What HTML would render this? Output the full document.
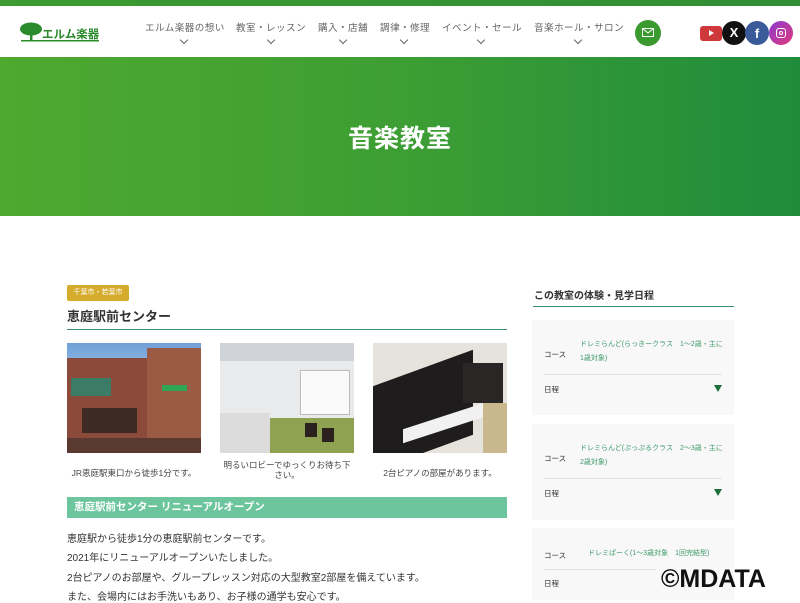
<!DOCTYPE html>
<html><head><meta charset="utf-8">
<style>
*{margin:0;padding:0;box-sizing:border-box}
body{width:800px;height:600px;overflow:hidden;background:#fff;font-family:"Liberation Sans","Noto Sans CJK JP",sans-serif;color:#333;position:relative}
.topbar{position:absolute;left:0;top:0;width:800px;height:6px;background:linear-gradient(90deg,#3d9b32,#2f8d35)}
.header{position:absolute;top:6px;left:0;width:800px;height:51px;background:#fff}
.logo{position:absolute;left:20px;top:15px}
.nav{position:absolute;top:14px;font-size:9.6px;color:#666;letter-spacing:0.4px}
.chev{position:absolute;width:6px;height:6px;border-right:1.2px solid #666;border-bottom:1.2px solid #666;transform:rotate(45deg)}
.circ{position:absolute;border-radius:50%}
.hero{position:absolute;top:57px;left:0;width:800px;height:159px;background:linear-gradient(90deg,#4ea92f 0%,#3d9e33 50%,#1f8c3c 100%)}
.hero h1{position:absolute;width:800px;top:62px;text-align:center;color:#fff;font-size:25px;font-weight:bold;letter-spacing:1px}
.tag{position:absolute;left:67px;top:285px;width:62px;height:16px;background:#d6ac2c;border-radius:2px;color:#fff;font-size:7px;text-align:center;line-height:16px}
.t1{position:absolute;left:67px;top:306px;font-size:13px;font-weight:bold;color:#333}
.line{position:absolute;height:1px;background:#3b8f6a}
.ph{position:absolute;top:343px;width:134px;height:110px;overflow:hidden}
.cap{position:absolute;font-size:8.5px;color:#444;text-align:center;width:134px}
.bar{position:absolute;left:67px;top:497px;width:440px;height:21px;background:#6cc59c;color:#fff;font-weight:bold;font-size:10.5px;line-height:21px;padding-left:7px}
.p{position:absolute;left:67px;font-size:10px;color:#333}
.side h3{position:absolute;left:534px;top:287px;font-size:10px;color:#333;font-weight:bold}
.card{position:absolute;left:532px;width:202px;background:#f8f8f8}
.lab{position:absolute;font-size:7.5px;color:#333;left:12px}
.crs{position:absolute;left:48px;font-size:7px;color:#3e9a6b;line-height:14px;width:145px}
.tri{position:absolute;right:12px;width:0;height:0;border-left:4px solid transparent;border-right:4px solid transparent;border-top:7px solid #1e6f3a}
.sep{position:absolute;left:12px;height:1px;background:#e4e4e4}
.wm{position:absolute;left:661px;top:565px;font-size:25px;color:#111;font-weight:bold}
</style></head><body>
<div class="topbar"></div>
<div class="header">
 <svg class="logo" width="90" height="24" viewBox="0 0 90 24">
  <ellipse cx="11" cy="8" rx="11" ry="6.5" fill="#2b8a2b"/>
  <rect x="10" y="11" width="2.5" height="9" fill="#2b8a2b"/>
  <rect x="1" y="19" width="78" height="1.5" fill="#2b8a2b"/>
  <text x="22" y="17" font-size="11.5" font-weight="bold" fill="#2b8a2b" font-family="Noto Sans CJK JP,sans-serif">エルム楽器</text>
 </svg>
 <div class="nav" style="left:145px">エルム楽器の想い</div><div class="chev" style="left:181px;top:31px"></div>
 <div class="nav" style="left:236px">教室・レッスン</div><div class="chev" style="left:268px;top:31px"></div>
 <div class="nav" style="left:318px">購入・店舗</div><div class="chev" style="left:340px;top:31px"></div>
 <div class="nav" style="left:380px">調律・修理</div><div class="chev" style="left:401px;top:31px"></div>
 <div class="nav" style="left:442px">イベント・セール</div><div class="chev" style="left:478px;top:31px"></div>
 <div class="nav" style="left:534px">音楽ホール・サロン</div><div class="chev" style="left:575px;top:31px"></div>
 <div class="circ" style="left:635px;top:14px;width:26px;height:26px;background:#3a9a30"></div>
 <svg style="position:absolute;left:642px;top:22px" width="12" height="9" viewBox="0 0 12 9"><rect x="0.5" y="0.5" width="11" height="8" fill="none" stroke="#fff"/><path d="M0.5 0.5L6 5L11.5 0.5" fill="none" stroke="#fff"/></svg>
 <div style="position:absolute;left:700px;top:20px;width:22px;height:15px;background:#d0393b;border-radius:3px"></div>
 <div style="position:absolute;left:709px;top:24px;border-left:5px solid #fff;border-top:3.5px solid transparent;border-bottom:3.5px solid transparent"></div>
 <div class="circ" style="left:722px;top:15px;width:24px;height:24px;background:#111;color:#fff;font-size:13px;font-weight:bold;text-align:center;line-height:24px">X</div>
 <div class="circ" style="left:745px;top:15px;width:24px;height:24px;background:#3b5a9a;color:#fff;font-size:13px;font-weight:bold;text-align:center;line-height:25px">f</div>
 <div class="circ" style="left:769px;top:15px;width:24px;height:24px;background:linear-gradient(135deg,#8a3ad0,#e23a7c)"></div>
 <div style="position:absolute;left:776px;top:22px;width:10px;height:10px;border:1.5px solid #fff;border-radius:3px"></div>
 <div class="circ" style="left:779px;top:25px;width:4px;height:4px;border:1.2px solid #fff"></div>
</div>
<div class="hero"><h1>音楽教室</h1></div>

<div class="tag">千葉市・若葉市</div>
<div class="t1">恵庭駅前センター</div>
<div class="line" style="left:67px;top:329px;width:440px"></div>

<div class="ph" style="left:67px;background:linear-gradient(#6f9fd8 0%,#9cc0e8 30%,#8a5040 30%)">
 <div style="position:absolute;left:0;top:15px;width:134px;height:95px;background:#8b4a3a"></div>
 <div style="position:absolute;left:80px;top:5px;width:54px;height:105px;background:#9a5a44"></div>
 <div style="position:absolute;left:4px;top:35px;width:40px;height:18px;background:#3c7c66"></div>
 <div style="position:absolute;left:95px;top:42px;width:25px;height:6px;background:#2fa655"></div>
 <div style="position:absolute;left:15px;top:65px;width:55px;height:25px;background:#3e2a24"></div>
 <div style="position:absolute;left:0;top:95px;width:134px;height:15px;background:#5a3a30"></div>
</div>
<div class="ph" style="left:220px;background:#e9eaec">
 <div style="position:absolute;left:0;top:0;width:134px;height:18px;background:#cfd2d6"></div>
 <div style="position:absolute;left:80px;top:27px;width:50px;height:45px;background:#fafafa;border:1px solid #bbb"></div>
 <div style="position:absolute;left:0;top:75px;width:134px;height:35px;background:#8fa252"></div>
 <div style="position:absolute;left:0;top:70px;width:50px;height:40px;background:#dcdcdc"></div>
 <div style="position:absolute;left:85px;top:80px;width:12px;height:14px;background:#2b2220"></div>
 <div style="position:absolute;left:102px;top:85px;width:12px;height:14px;background:#2b2220"></div>
</div>
<div class="ph" style="left:373px;background:#e6e3dd">
 <div style="position:absolute;left:0;top:25px;width:100px;height:85px;background:#1e1c1c;transform:skewY(-20deg)"></div>
 <div style="position:absolute;left:30px;top:70px;width:100px;height:14px;background:#f1f1f1;transform:skewY(-18deg)"></div>
 <div style="position:absolute;left:90px;top:20px;width:40px;height:40px;background:#2a2626"></div>
 <div style="position:absolute;left:110px;top:60px;width:24px;height:50px;background:#c9b78e"></div>
</div>
<div class="cap" style="left:67px;top:467px">JR恵庭駅東口から徒歩1分です。</div>
<div class="cap" style="left:220px;top:460px;line-height:10px">明るいロビーでゆっくりお待ち下さい。</div>
<div class="cap" style="left:373px;top:467px">2台ピアノの部屋があります。</div>

<div class="bar">恵庭駅前センター リニューアルオープン</div>
<div class="p" style="top:530px">恵庭駅から徒歩1分の恵庭駅前センターです。</div>
<div class="p" style="top:549px">2021年にリニューアルオープンいたしました。</div>
<div class="p" style="top:569px">2台ピアノのお部屋や、グループレッスン対応の大型教室2部屋を備えています。</div>
<div class="p" style="top:588px">また、会場内にはお手洗いもあり、お子様の通学も安心です。</div>

<div class="side"><h3>この教室の体験・見学日程</h3></div>
<div class="line" style="left:533px;top:306px;width:201px"></div>

<div class="card" style="top:320px;height:95px">
 <div class="lab" style="top:29px">コース</div>
 <div class="crs" style="top:18px">ドレミらんど(らっきークラス　1〜2歳・主に1歳対象)</div>
 <div class="sep" style="top:54px;width:178px"></div>
 <div class="lab" style="top:64px">日程</div><div class="tri" style="top:65px"></div>
</div>
<div class="card" style="top:424px;height:96px">
 <div class="lab" style="top:29px">コース</div>
 <div class="crs" style="top:18px">ドレミらんど(ぷっぷるクラス　2〜3歳・主に2歳対象)</div>
 <div class="sep" style="top:54px;width:178px"></div>
 <div class="lab" style="top:64px">日程</div><div class="tri" style="top:65px"></div>
</div>
<div class="card" style="top:528px;height:72px">
 <div class="lab" style="top:22px">コース</div>
 <div class="crs" style="top:19px;left:56px">ドレミぱーく(1〜3歳対象　1回完結型)</div>
 <div class="sep" style="top:41px;width:112px"></div>
 <div class="lab" style="top:50px">日程</div>
</div>
<div class="wm">©MDATA</div>
</body></html>
